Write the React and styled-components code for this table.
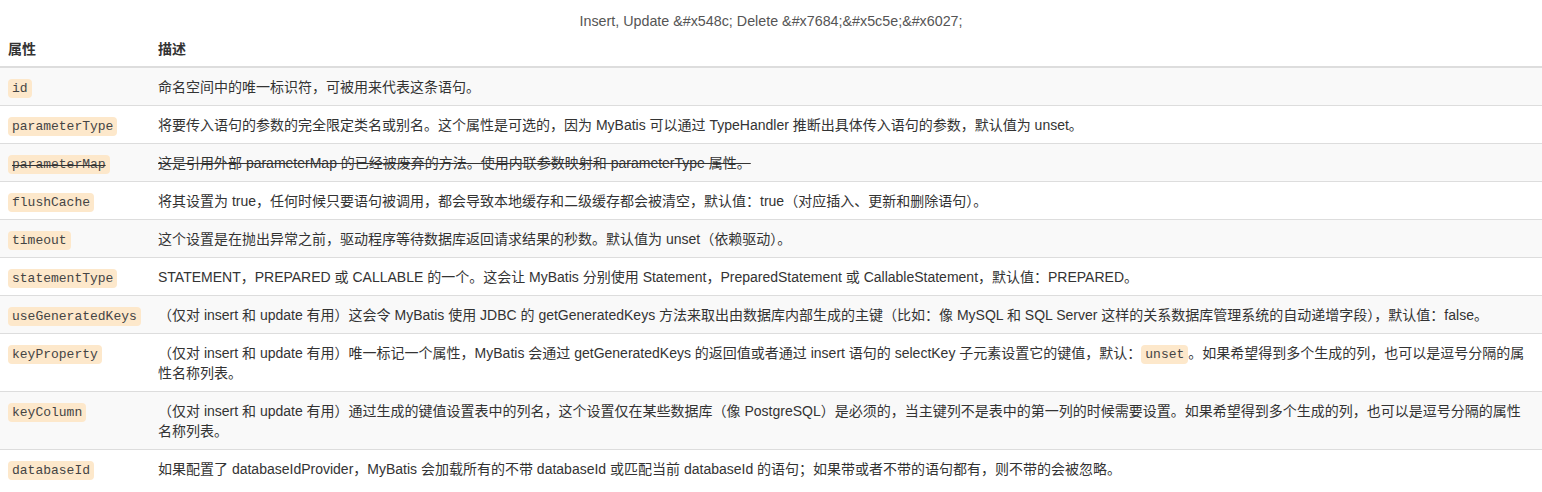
import React from 'react';
import styled, { createGlobalStyle } from 'styled-components';

const GlobalStyle = createGlobalStyle`
  html, body {
    margin: 0;
    padding: 0;
    background: #fff;
  }
  body {
    font-family: "Liberation Sans", "Noto Sans CJK SC", sans-serif;
    font-size: 14px;
    color: #333;
  }
`;

const Table = styled.table`
  width: 100%;
  border-collapse: collapse;
  border-spacing: 0;
`;

const Caption = styled.caption`
  padding: 11px 8px 0;
  line-height: 20px;
  text-align: center;
  color: #555;
  font-size: 14.3px;
`;

const HeadCell = styled.th`
  text-align: left;
  font-weight: bold;
  padding: 8px 8px 7px;
  line-height: 20px;
  border-bottom: 2px solid #ddd;
  width: ${(p) => p.$width || 'auto'};
`;

const Row = styled.tr`
  background: ${(p) => (p.$striped ? '#f9f9f9' : '#fff')};
  text-decoration: ${(p) => (p.$deprecated ? 'line-through' : 'none')};
`;

const Cell = styled.td`
  padding: 9px 8px 8px;
  line-height: 20px;
  vertical-align: top;
  border-top: 1px solid #ddd;
`;

const Code = styled.code`
  font-family: "Liberation Mono", monospace;
  font-size: 13px;
  line-height: 14px;
  padding: 2px 4px;
  color: #444;
  background: #fde8cb;
  border-radius: 4px;
`;

const rows = [
  { name: 'id', desc: '命名空间中的唯一标识符，可被用来代表这条语句。' },
  {
    name: 'parameterType',
    desc: '将要传入语句的参数的完全限定类名或别名。这个属性是可选的，因为 MyBatis 可以通过 TypeHandler 推断出具体传入语句的参数，默认值为 unset。',
  },
  {
    name: 'parameterMap',
    deprecated: true,
    desc: '这是引用外部 parameterMap 的已经被废弃的方法。使用内联参数映射和 parameterType 属性。',
  },
  {
    name: 'flushCache',
    desc: '将其设置为 true，任何时候只要语句被调用，都会导致本地缓存和二级缓存都会被清空，默认值：true（对应插入、更新和删除语句）。',
  },
  {
    name: 'timeout',
    desc: '这个设置是在抛出异常之前，驱动程序等待数据库返回请求结果的秒数。默认值为 unset（依赖驱动）。',
  },
  {
    name: 'statementType',
    desc: 'STATEMENT，PREPARED 或 CALLABLE 的一个。这会让 MyBatis 分别使用 Statement，PreparedStatement 或 CallableStatement，默认值：PREPARED。',
  },
  {
    name: 'useGeneratedKeys',
    desc: '（仅对 insert 和 update 有用）这会令 MyBatis 使用 JDBC 的 getGeneratedKeys 方法来取出由数据库内部生成的主键（比如：像 MySQL 和 SQL Server 这样的关系数据库管理系统的自动递增字段），默认值：false。',
  },
  {
    name: 'keyProperty',
    desc: (
      <>
        （仅对 insert 和 update 有用）唯一标记一个属性，MyBatis 会通过 getGeneratedKeys 的返回值或者通过 insert 语句的 selectKey 子元素设置它的键值，默认：<Code>unset</Code>。如果希望得到多个生成的列，也可以是逗号分隔的属性名称列表。
      </>
    ),
  },
  {
    name: 'keyColumn',
    desc: '（仅对 insert 和 update 有用）通过生成的键值设置表中的列名，这个设置仅在某些数据库（像 PostgreSQL）是必须的，当主键列不是表中的第一列的时候需要设置。如果希望得到多个生成的列，也可以是逗号分隔的属性名称列表。',
  },
  {
    name: 'databaseId',
    desc: '如果配置了 databaseIdProvider，MyBatis 会加载所有的不带 databaseId 或匹配当前 databaseId 的语句；如果带或者不带的语句都有，则不带的会被忽略。',
  },
];

const App = () => {
  return (
    <>
      <GlobalStyle />
      <Table>
        <Caption>Insert, Update &amp;#x548c; Delete &amp;#x7684;&amp;#x5c5e;&amp;#x6027;</Caption>
        <thead>
          <tr>
            <HeadCell $width="134px">属性</HeadCell>
            <HeadCell>描述</HeadCell>
          </tr>
        </thead>
        <tbody>
          {rows.map((r, i) => (
            <Row key={r.name} $striped={i % 2 === 0} $deprecated={r.deprecated}>
              <Cell>
                <Code>{r.name}</Code>
              </Cell>
              <Cell>{r.desc}</Cell>
            </Row>
          ))}
        </tbody>
      </Table>
    </>
  );
};

export default App;
